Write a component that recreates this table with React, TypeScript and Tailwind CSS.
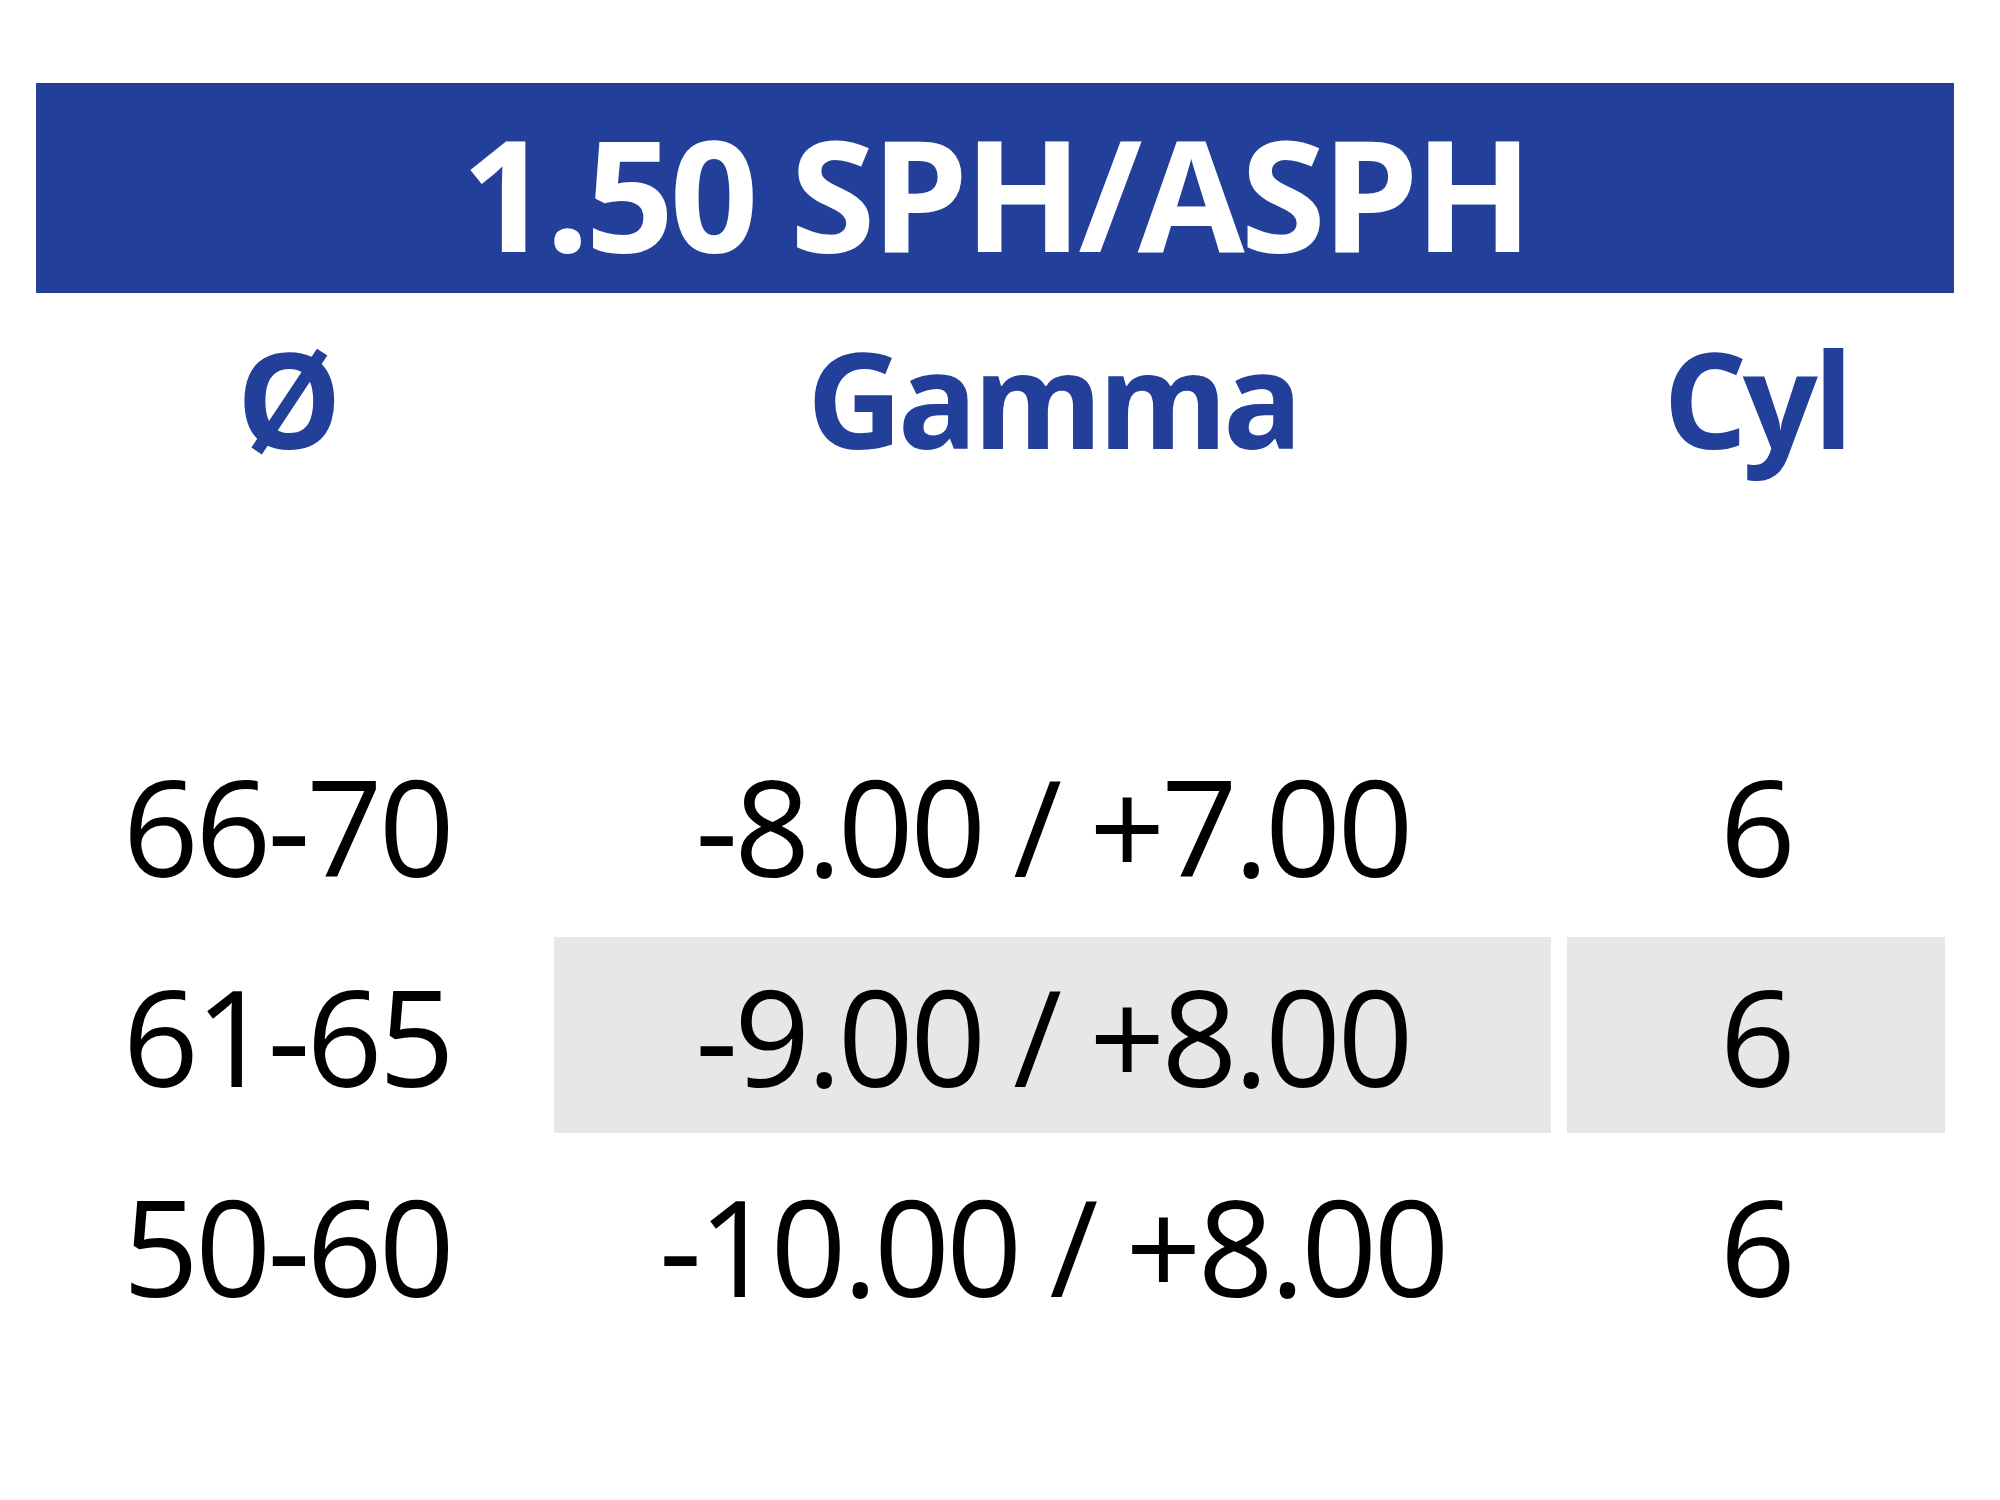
import React from 'react';

const rows = [
  { dia: '66-70', gamma: '-8.00 / +7.00', cyl: '6', shaded: false },
  { dia: '61-65', gamma: '-9.00 / +8.00', cyl: '6', shaded: true },
  { dia: '50-60', gamma: '-10.00 / +8.00', cyl: '6', shaded: false },
];

const font = { fontFamily: '"Open Sans", "Noto Sans", sans-serif' };

export default function App() {
  return (
    <div className="w-[2000px] h-[1500px] bg-white pt-[83px] pl-[36px]" style={font}>
      {/* Title bar */}
      <div className="w-[1918px] h-[210px] bg-[#22409a] flex items-center justify-center pt-[6px]">
        <h1 className="text-white font-bold text-[155px] leading-none tracking-[-0.028em]">
          1.50 SPH/ASPH
        </h1>
      </div>

      {/* Column headers */}
      <div className="grid grid-cols-[502px_997px_378px] gap-x-[16px] mt-[39px] text-[#22409a] font-bold text-[132px] leading-none tracking-[-0.035em]">
        <div className="text-center">Ø</div>
        <div className="text-center">Gamma</div>
        <div className="text-center">Cyl</div>
      </div>

      {/* Rows */}
      <div className="flex flex-col gap-y-[14px] mt-[263px]">
        {rows.map((r) => (
          <div
            key={r.dia}
            className="grid grid-cols-[502px_997px_378px] gap-x-[16px] h-[196px] text-black text-[133px] leading-none tracking-[-0.028em]"
          >
            <div className="flex items-center justify-center">{r.dia}</div>
            <div className={`flex items-center justify-center ${r.shaded ? 'bg-[#e6e7e8]' : ''}`}>
              {r.gamma}
            </div>
            <div className={`flex items-center justify-center ${r.shaded ? 'bg-[#e6e7e8]' : ''}`}>
              {r.cyl}
            </div>
          </div>
        ))}
      </div>
    </div>
  );
}
